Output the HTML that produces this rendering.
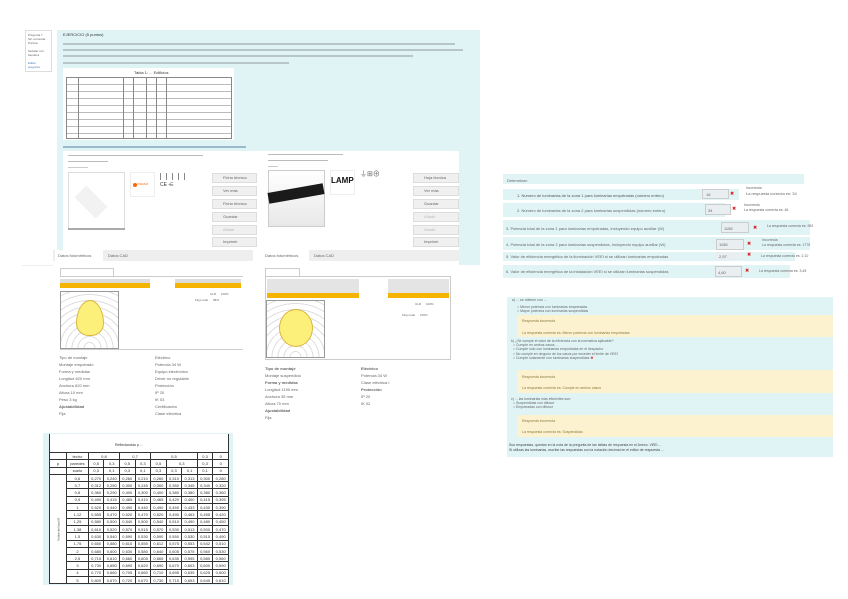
<!DOCTYPE html>
<html><head><meta charset="utf-8"><style>
*{margin:0;padding:0;box-sizing:border-box}
body{width:848px;height:599px;background:#fff;position:relative;overflow:hidden;font-family:"Liberation Sans",sans-serif;color:#555}
.a{position:absolute}
.t{position:absolute;font-size:4px;line-height:5px;white-space:nowrap;color:#666}
.cy{background:#e0f4f6}
.ln{position:absolute;height:1.5px;background:#9fb0b5}
.yel{background:#fcf2cf}
.or{background:#f5b400}
.btn{position:absolute;background:#f0f0f0;border:1px solid #ddd;height:10px;font-size:4px;line-height:8px;padding-left:10px;color:#666}
.pol{position:absolute;border:1px solid #999;background:#fff;
background-image:repeating-radial-gradient(circle at 50% 100%,#fff 0 5px,#ddd 5px 6px)}
table.g{border-collapse:collapse;position:absolute}
table.g td{border:1px solid #333;font-size:4px;height:7.3px;text-align:center;color:#333;padding:0}
</style></head><body>

<!-- left sidebar -->
<div class="a" style="left:25px;top:30px;width:27px;height:42px;border:1px solid #ddd;background:#fff"></div>
<div class="t" style="left:28px;top:33px;line-height:4px;font-size:3px">Pregunta 7<br>Sin contestar<br>Puntúa<br><br>Señalar con<br>bandera<br><br><span style="color:#4a7ab8">Editar<br>pregunta</span></div>

<!-- main cyan panel -->
<div class="a cy" style="left:57px;top:30px;width:423px;height:235px"></div>
<div class="t" style="left:63px;top:32px;color:#333">EJERCICIO (5 puntos)</div>
<div class="ln" style="left:63px;top:43px;width:392px;background:#b8c6c9"></div>
<div class="ln" style="left:63px;top:49px;width:400px;background:#b8c6c9"></div>
<div class="ln" style="left:63px;top:55px;width:350px;background:#b8c6c9"></div>
<div class="ln" style="left:63px;top:62px;width:226px;background:#b8c6c9"></div>
<!-- table -->
<div class="a" style="left:63px;top:68px;width:171px;height:72px;background:#fff"></div>
<div class="t" style="left:134px;top:70px;color:#333">Tabla 1: ... Edificios</div>
<div class="a" style="left:66px;top:77px;width:166px;height:62px;border:1px solid #888;
background-image:repeating-linear-gradient(#fff 0 6px,#bbb 6px 7px),linear-gradient(#fff,#fff)"></div>
<div class="a" style="left:78px;top:77px;width:1px;height:62px;background:#888"></div>
<div class="a" style="left:123px;top:77px;width:1px;height:62px;background:#888"></div>
<div class="a" style="left:133px;top:77px;width:1px;height:62px;background:#888"></div>
<div class="a" style="left:146px;top:77px;width:1px;height:62px;background:#888"></div>
<div class="a" style="left:156px;top:77px;width:1px;height:62px;background:#888"></div>
<div class="a" style="left:166px;top:77px;width:1px;height:62px;background:#888"></div>
<div class="ln" style="left:63px;top:146px;width:183px;background:#9bc"></div>

<!-- product cards -->
<div class="a" style="left:63px;top:151px;width:396px;height:99px;background:#fff"></div>
<div class="ln" style="left:68px;top:155px;width:135px;height:1px;background:#bbb"></div>
<div class="ln" style="left:68px;top:161px;width:40px;height:1px;background:#bbb"></div>
<div class="ln" style="left:68px;top:167px;width:20px;height:1px;background:#ccc"></div>
<div class="a" style="left:68px;top:172px;width:57px;height:58px;border:1px solid #ddd;background:#fff"></div>
<div class="a" style="left:76px;top:187px;width:30px;height:30px;background:#f2f2f2;transform:rotate(45deg) scaleY(.55)"></div>
<div class="a" style="left:68px;top:228px;width:57px;height:2px;background:#aaa"></div>
<div class="a" style="left:130px;top:172px;width:25px;height:25px;border:1px solid #eee"></div>
<div class="a" style="left:133px;top:183px;width:4px;height:4px;border-radius:50%;background:#f60"></div>
<div class="t" style="left:137px;top:182px;color:#f60;font-size:3px">OSRAM</div>
<div class="t" style="left:160px;top:183px;font-size:5px;color:#333">CE ⋲</div>
<div class="a" style="left:160px;top:173px;width:30px;height:7px;border:0;background:repeating-linear-gradient(90deg,#888 0 1px,#fff 1px 6px)"></div>
<div class="btn" style="left:212px;top:173px;width:45px">Ficha técnica</div>
<div class="btn" style="left:212px;top:186px;width:45px">Ver más</div>
<div class="btn" style="left:212px;top:199px;width:45px">Ficha técnica</div>
<div class="btn" style="left:212px;top:212px;width:45px">Guardar</div>
<div class="btn" style="left:212px;top:225px;width:45px;color:#bbb">Añadir</div>
<div class="btn" style="left:212px;top:237px;width:45px">Imprimir</div>

<div class="ln" style="left:268px;top:154px;width:75px;height:1px;background:#bbb"></div>
<div class="ln" style="left:268px;top:160px;width:60px;height:1px;background:#bbb"></div>
<div class="ln" style="left:268px;top:166px;width:10px;height:1px;background:#ccc"></div>
<div class="a" style="left:268px;top:170px;width:57px;height:57px;border:1px solid #ccc;background:linear-gradient(180deg,#fff,#e8e8e8)"></div>
<div class="a" style="left:268px;top:188px;width:56px;height:11px;background:#1a1a1a;transform:rotate(-10deg)"></div>
<div class="a" style="left:330px;top:170px;width:25px;height:25px;border:1px solid #eee"></div>
<div class="t" style="left:331px;top:177px;font-size:8px;font-weight:bold;color:#111;line-height:8px">LAMP</div>
<div class="t" style="left:360px;top:172px;font-size:7px;color:#666">⏚⊞⊕</div>
<div class="btn" style="left:413px;top:173px;width:46px">Hoja técnica</div>
<div class="btn" style="left:413px;top:186px;width:46px">Ver más</div>
<div class="btn" style="left:413px;top:199px;width:46px">Guardar</div>
<div class="btn" style="left:413px;top:212px;width:46px;color:#bbb">Añadir</div>
<div class="btn" style="left:413px;top:225px;width:46px;color:#bbb">Añadir</div>
<div class="btn" style="left:413px;top:237px;width:46px">Imprimir</div>

<!-- lower panel -->
<div class="a" style="left:22px;top:265px;width:35px;height:1px;background:#eee"></div>
<div class="a" style="left:53px;top:250px;width:406px;height:175px;background:#fff"></div>
<div class="a" style="left:53px;top:250px;width:200px;height:11px;background:#eee"></div>
<div class="a" style="left:55px;top:250px;width:48px;height:11px;background:#fff"></div>
<div class="t" style="left:58px;top:253px">Datos fotométricos</div>
<div class="t" style="left:108px;top:253px">Datos CAD</div>
<div class="a" style="left:263px;top:250px;width:196px;height:11px;background:#eee"></div>
<div class="a" style="left:263px;top:250px;width:46px;height:11px;background:#fff"></div>
<div class="t" style="left:265px;top:253px">Datos fotométricos</div>
<div class="t" style="left:314px;top:253px">Datos CAD</div>
<!-- left photometry -->
<div class="a" style="left:60px;top:268px;width:54px;height:8px;border:1px solid #ccc;border-bottom:0"></div>
<div class="a" style="left:60px;top:276px;width:183px;height:1px;background:#ccc"></div>
<div class="a" style="left:60px;top:279px;width:90px;height:4px;background:#ddd"></div>
<div class="a or" style="left:60px;top:283px;width:90px;height:5px"></div>
<div class="a" style="left:175px;top:279px;width:66px;height:4px;background:#ddd"></div>
<div class="a or" style="left:175px;top:283px;width:66px;height:5px"></div>
<div class="t" style="left:210px;top:292px;font-size:3px">ULR &nbsp;&nbsp;&nbsp;&nbsp; 100%</div>
<div class="t" style="left:195px;top:298px;font-size:3px">Flujo total &nbsp;&nbsp;&nbsp;&nbsp; 98%</div>
<div class="pol" style="left:60px;top:291px;width:59px;height:58px"></div>
<div class="a" style="left:76px;top:300px;width:28px;height:36px;background:#fdf07a;border:1px solid #d9b640;border-radius:50% 50% 45% 45% / 65% 65% 35% 35%"></div>
<div class="a" style="left:60px;top:349px;width:183px;height:1px;background:#ccc"></div>
<div class="t" style="left:59px;top:354px;line-height:7px">Tipo de montaje<br>Montaje empotrado<br>Forma y medidas<br>Longitud 620 mm<br>Anchura 620 mm<br>Altura 10 mm<br>Peso 3 kg<br><b>Ajustabilidad</b><br>Fija</div>
<div class="t" style="left:155px;top:354px;line-height:7px">Eléctrico<br>Potencia 34 W<br>Equipo electrónico<br>Driver no regulable<br>Protección<br>IP 20<br>IK 03<br>Certificación<br>Clase eléctrica</div>
<!-- right photometry -->
<div class="a" style="left:265px;top:268px;width:35px;height:8px;border:1px solid #ccc;border-bottom:0"></div>
<div class="a" style="left:265px;top:276px;width:186px;height:84px;border:1px solid #ccc"></div>
<div class="a" style="left:267px;top:279px;width:92px;height:14px;background:#e4e4e4"></div>
<div class="a or" style="left:267px;top:293px;width:92px;height:5px"></div>
<div class="a" style="left:388px;top:279px;width:61px;height:14px;background:#e4e4e4"></div>
<div class="a or" style="left:388px;top:293px;width:61px;height:5px"></div>
<div class="t" style="left:415px;top:302px;font-size:3px">ULR &nbsp;&nbsp;&nbsp;&nbsp; 100%</div>
<div class="t" style="left:402px;top:313px;font-size:3px">Flujo total &nbsp;&nbsp;&nbsp;&nbsp; 100%</div>
<div class="pol" style="left:266px;top:300px;width:59px;height:58px"></div>
<div class="a" style="left:279px;top:309px;width:34px;height:38px;background:#fdf07a;border:1px solid #d9b640;border-radius:50%"></div>
<div class="t" style="left:265px;top:365px;line-height:7px"><b>Tipo de montaje</b><br>Montaje suspendido<br><b>Forma y medidas</b><br>Longitud 1190 mm<br>Anchura 35 mm<br>Altura 70 mm<br><b>Ajustabilidad</b><br>Fija</div>
<div class="t" style="left:361px;top:365px;line-height:7px"><b>Eléctrico</b><br>Potencia 34 W<br>Clase eléctrica I<br><b>Protección</b><br>IP 20<br>IK 02</div>

<!-- bottom-left table -->
<div class="a" style="left:43px;top:433px;width:190px;height:152px;background:#e0f4f6"></div>
<div class="a" style="left:49px;top:434px;width:180px;height:150px;background:#fff;border-left:1px solid #333;border-right:1px solid #333"></div>
<div class="t" style="left:115px;top:443px;font-size:3.5px;color:#333">Reflectancias ρ ...</div>
<table class="g" style="left:49px;top:452px;width:180px">
<tr><td style="width:10px"></td><td>techo</td><td colspan="2">0,8</td><td colspan="2">0,7</td><td colspan="3">0,5</td><td>0,3</td><td>0</td></tr>
<tr><td>ρ</td><td>paredes</td><td>0,5</td><td>0,3</td><td>0,5</td><td>0,3</td><td>0,5</td><td colspan="2">0,3</td><td>0,3</td><td>0</td></tr>
<tr><td></td><td>suelo</td><td>0,3</td><td>0,1</td><td>0,3</td><td>0,1</td><td>0,3</td><td>0,3</td><td>0,1</td><td>0,1</td><td>0</td></tr>
<tr><td rowspan="15" style="font-size:3px;writing-mode:vertical-rl;transform:rotate(180deg)">Índice del local K</td><td>0,6</td><td>0,270</td><td>0,240</td><td>0,260</td><td>0,210</td><td>0,260</td><td>0,310</td><td>0,313</td><td>0,300</td><td>0,280</td></tr>
<tr><td>0,7</td><td>0,312</td><td>0,250</td><td>0,300</td><td>0,245</td><td>0,300</td><td>0,350</td><td>0,345</td><td>0,340</td><td>0,320</td></tr>
<tr><td>0,8</td><td>0,360</td><td>0,290</td><td>0,400</td><td>0,300</td><td>0,400</td><td>0,380</td><td>0,380</td><td>0,380</td><td>0,360</td></tr>
<tr><td>0,9</td><td>0,490</td><td>0,415</td><td>0,465</td><td>0,410</td><td>0,465</td><td>0,420</td><td>0,400</td><td>0,415</td><td>0,395</td></tr>
<tr><td>1</td><td>0,520</td><td>0,440</td><td>0,490</td><td>0,440</td><td>0,490</td><td>0,450</td><td>0,433</td><td>0,430</td><td>0,390</td></tr>
<tr><td>1,12</td><td>0,555</td><td>0,470</td><td>0,520</td><td>0,470</td><td>0,520</td><td>0,490</td><td>0,463</td><td>0,455</td><td>0,420</td></tr>
<tr><td>1,25</td><td>0,580</td><td>0,500</td><td>0,540</td><td>0,500</td><td>0,540</td><td>0,510</td><td>0,490</td><td>0,480</td><td>0,450</td></tr>
<tr><td>1,38</td><td>0,610</td><td>0,520</td><td>0,570</td><td>0,515</td><td>0,570</td><td>0,530</td><td>0,513</td><td>0,500</td><td>0,470</td></tr>
<tr><td>1,5</td><td>0,630</td><td>0,540</td><td>0,590</td><td>0,530</td><td>0,590</td><td>0,550</td><td>0,530</td><td>0,515</td><td>0,490</td></tr>
<tr><td>1,75</td><td>0,650</td><td>0,580</td><td>0,610</td><td>0,555</td><td>0,612</td><td>0,575</td><td>0,553</td><td>0,542</td><td>0,510</td></tr>
<tr><td>2</td><td>0,680</td><td>0,600</td><td>0,630</td><td>0,580</td><td>0,640</td><td>0,605</td><td>0,575</td><td>0,560</td><td>0,530</td></tr>
<tr><td>2,5</td><td>0,715</td><td>0,610</td><td>0,660</td><td>0,605</td><td>0,665</td><td>0,635</td><td>0,595</td><td>0,580</td><td>0,560</td></tr>
<tr><td>3</td><td>0,730</td><td>0,650</td><td>0,690</td><td>0,620</td><td>0,690</td><td>0,670</td><td>0,603</td><td>0,600</td><td>0,590</td></tr>
<tr><td>4</td><td>0,770</td><td>0,660</td><td>0,705</td><td>0,660</td><td>0,710</td><td>0,695</td><td>0,635</td><td>0,625</td><td>0,600</td></tr>
<tr><td>5</td><td>0,800</td><td>0,670</td><td>0,720</td><td>0,670</td><td>0,730</td><td>0,715</td><td>0,653</td><td>0,645</td><td>0,610</td></tr>
</table>

<!-- right quiz panel 1 -->
<div class="a cy" style="left:503px;top:174px;width:301px;height:10px"></div>
<div class="t" style="left:507px;top:178px">Determinar:</div>
<div class="a cy" style="left:503px;top:189px;width:236px;height:11px"></div>
<div class="t" style="left:517px;top:193px;color:#555">1. Número de luminarias de la zona 1 para luminarias empotradas (número entero)</div>
<div class="a" style="left:702px;top:189px;width:27px;height:10px;background:#e9eef0;border:1px solid #ccc"></div><div class="t" style="left:706px;top:192px">16</div>
<div class="t" style="left:730px;top:192px;color:#d22;font-size:5px">✖</div>
<div class="t" style="left:746px;top:186px;font-size:3.5px;line-height:5px">Incorrecta<br><span style="font-size:4px">La respuesta correcta es: 34</span></div>
<div class="a cy" style="left:503px;top:203px;width:222px;height:14px"></div>
<div class="t" style="left:517px;top:208px">2. Número de luminarias de la zona 2 para luminarias suspendidas (número entero)</div>
<div class="a" style="left:705px;top:204px;width:26px;height:11px;background:#e9eef0;border:1px solid #ccc"></div><div class="t" style="left:708px;top:208px">34</div>
<div class="t" style="left:732px;top:207px;color:#d22;font-size:5px">✖</div>
<div class="t" style="left:744px;top:203px;font-size:3.5px;line-height:5px">Incorrecta<br>La respuesta correcta es: 46</div>
<div class="a cy" style="left:503px;top:220px;width:307px;height:15px"></div>
<div class="t" style="left:506px;top:226px">3. Potencia total de la zona 1 para luminarias empotradas, incluyendo equipo auxiliar (W)</div>
<div class="a" style="left:721px;top:222px;width:28px;height:11px;background:#e9eef0;border:1px solid #ccc"></div><div class="t" style="left:724px;top:226px">1156</div>
<div class="t" style="left:753px;top:226px;color:#d22;font-size:5px">✖</div>
<div class="t" style="left:767px;top:224px;font-size:3.5px">La respuesta correcta es: 952</div>
<div class="a cy" style="left:503px;top:237px;width:307px;height:13px"></div>
<div class="t" style="left:506px;top:242px">4. Potencia total de la zona 2 para luminarias suspendidas, incluyendo equipo auxiliar (W)</div>
<div class="a" style="left:716px;top:239px;width:28px;height:11px;background:#e9eef0;border:1px solid #ccc"></div><div class="t" style="left:719px;top:242px">1156</div>
<div class="t" style="left:747px;top:242px;color:#d22;font-size:5px">✖</div>
<div class="t" style="left:762px;top:238px;font-size:3.5px;line-height:5px">Incorrecta<br>La respuesta correcta es: 1775</div>
<div class="a cy" style="left:503px;top:252px;width:292px;height:9px"></div>
<div class="t" style="left:506px;top:254px">5. Valor de eficiencia energética de la iluminación VEEI si se utilizan luminarias empotradas</div>
<div class="a" style="left:716px;top:252px;width:26px;height:8px;background:#e9eef0"></div><div class="t" style="left:719px;top:254px">2,57</div>
<div class="t" style="left:747px;top:253px;color:#d22;font-size:5px">✖</div>
<div class="t" style="left:761px;top:254px;font-size:3.5px">La respuesta correcta es: 2,10</div>
<div class="a cy" style="left:503px;top:265px;width:287px;height:13px"></div>
<div class="t" style="left:506px;top:269px">6. Valor de eficiencia energética de la instalación VEEI si se utilizan luminarias suspendidas</div>
<div class="a" style="left:715px;top:266px;width:27px;height:11px;background:#e9eef0;border:1px solid #ccc"></div><div class="t" style="left:718px;top:270px">4,60</div>
<div class="t" style="left:745px;top:269px;color:#d22;font-size:5px">✖</div>
<div class="t" style="left:759px;top:269px;font-size:3.5px">La respuesta correcta es: 3,45</div>

<!-- right quiz panel 2 -->
<div class="a cy" style="left:507px;top:297px;width:326px;height:160px"></div>
<div class="t" style="left:512px;top:298px;font-size:3.5px">a) ... se obtiene con ...</div>
<div class="t" style="left:517px;top:305px;font-size:3.5px;line-height:4px">○ Menor potencia con luminarias empotradas<br>○ Mayor potencia con luminarias suspendidas</div>
<div class="a yel" style="left:517px;top:315px;width:316px;height:22px"></div>
<div class="t" style="left:522px;top:319px;font-size:3.5px;color:#8a7a40">Respuesta incorrecta</div>
<div class="t" style="left:522px;top:331px;font-size:3.5px;color:#8a7a40">La respuesta correcta es: Menor potencia con luminarias empotradas</div>
<div class="t" style="left:511px;top:339px;font-size:3.5px;line-height:4.2px">b) ¿Se cumple el valor de la eficiencia con la normativa aplicable?<br>&nbsp;&nbsp;○ Cumple en ambos casos ...<br>&nbsp;&nbsp;○ Cumple solo con luminarias empotradas en el despacho<br>&nbsp;&nbsp;○ No cumple en ninguno de los casos por exceder el límite de VEEI<br>&nbsp;&nbsp;○ Cumple solamente con luminarias suspendidas <span style="color:#d22">✖</span></div>
<div class="a yel" style="left:517px;top:370px;width:316px;height:23px"></div>
<div class="t" style="left:522px;top:375px;font-size:3.5px;color:#8a7a40">Respuesta incorrecta</div>
<div class="t" style="left:522px;top:386px;font-size:3.5px;color:#8a7a40">La respuesta correcta es: Cumple en ambos casos</div>
<div class="t" style="left:511px;top:397px;font-size:3.5px;line-height:4.2px">c) ... las luminarias más eficientes son:<br>&nbsp;&nbsp;○ Suspendidas con difusor<br>&nbsp;&nbsp;○ Empotradas con difusor</div>
<div class="a yel" style="left:517px;top:415px;width:316px;height:22px"></div>
<div class="t" style="left:522px;top:419px;font-size:3.5px;color:#8a7a40">Respuesta incorrecta</div>
<div class="t" style="left:522px;top:430px;font-size:3.5px;color:#8a7a40">La respuesta correcta es: Suspendidas</div>
<div class="t" style="left:509px;top:443px;font-size:3.5px;line-height:5px;color:#444">Sus respuestas, quedan en la nota de la pregunta de las tablas de respuesta en el Anexo. VEEI ...<br>Si utilizas las luminarias, escribe las respuestas con la notación decimal en el editor de respuesta ...</div>
</body></html>
